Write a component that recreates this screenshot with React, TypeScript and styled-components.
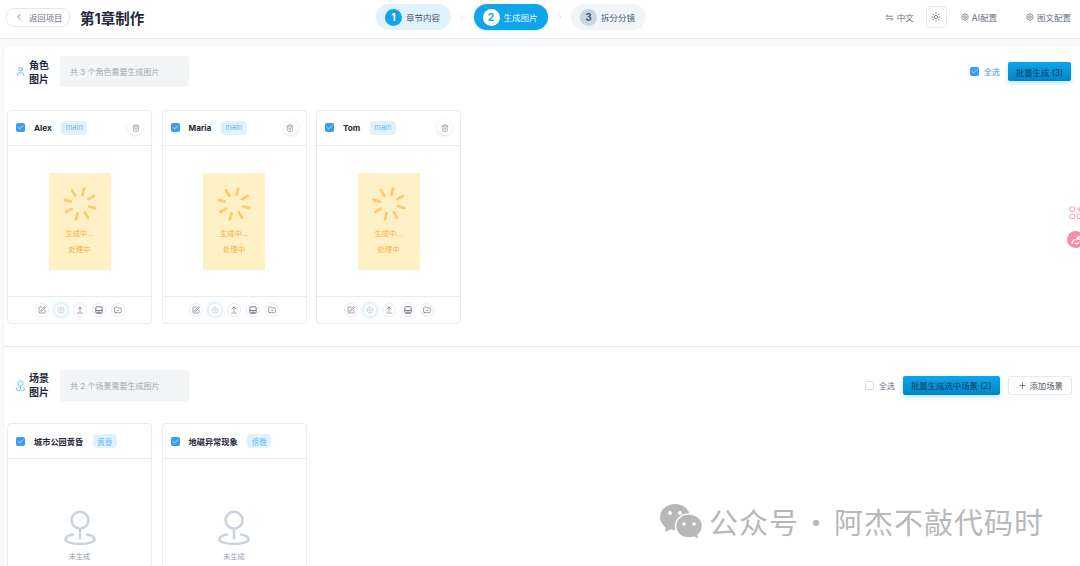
import styled, { createGlobalStyle } from 'styled-components';
import {
	ArrowUpFromLine,
	Check,
	ChevronLeft,
	ChevronRight,
	FolderDot,
	Loader,
	Plus,
	SquarePen,
	Sun,
	Trash2,
	User,
} from 'lucide-react';

const GlobalStyle = createGlobalStyle`
	html, body {
		margin: 0;
		height: 566px;
		overflow: hidden;
		background: #f8fafc;
		font-family: Inter, "Noto Sans CJK SC", "Liberation Sans", sans-serif;
	}
	* {
		box-sizing: border-box;
	}
`;

const Page = styled.div`
	position: relative;
	width: 1080px;
	height: 566px;
	overflow: hidden;
`;

const Header = styled.header`
	height: 39px;
	padding: 0 9px 4px 6px;
	background: #fff;
	border-bottom: 1px solid #e6e9ef;
	display: grid;
	grid-template-columns: 370px auto 1fr;
	align-items: center;
`;

const HeaderLeft = styled.div`
	display: flex;
	align-items: center;
	gap: 10px;
`;

const BackButton = styled.button`
	width: 64px;
	height: 19px;
	padding: 0 0 0 7px;
	display: flex;
	align-items: center;
	gap: 5px;
	background: #fff;
	border: 1px solid #e6e9ef;
	border-radius: 8px;
	color: #6b7280;
	font: inherit;
	font-size: 8.4px;
`;

const Title = styled.h1`
	margin: 0;
	font-size: 14.5px;
	font-weight: 700;
	color: #1f2937;
`;

const Steps = styled.nav`
	display: flex;
	align-items: center;
	color: #d5dae2;
`;

const Step = styled.div<{ $state: 'done' | 'active' | 'todo' }>`
	width: 74.5px;
	height: 26px;
	padding-left: 9px;
	display: flex;
	align-items: center;
	gap: 4px;
	border-radius: 13px;
	font-size: 8.5px;
	white-space: nowrap;
	background: ${(p) =>
		p.$state === 'done' ? '#e0f2fe' : p.$state === 'active' ? '#0ea5e9' : '#f1f5f9'};
	color: ${(p) => (p.$state === 'active' ? '#e6f6fe' : '#475569')};
	box-shadow: ${(p) => (p.$state === 'active' ? '0 1px 3px rgba(14,165,233,.25)' : 'none')};
`;

const StepNumber = styled.span<{ $state: 'done' | 'active' | 'todo' }>`
	width: 17px;
	height: 17px;
	flex: none;
	display: flex;
	align-items: center;
	justify-content: center;
	border-radius: 50%;
	font-size: 10px;
	font-weight: 700;
	background: ${(p) =>
		p.$state === 'done' ? '#0ea5e9' : p.$state === 'active' ? '#fff' : '#cbd5e1'};
	color: ${(p) =>
		p.$state === 'done' ? '#fff' : p.$state === 'active' ? '#0ea5e9' : '#475569'};
`;

const StepArrow = styled.span`
	width: 23px;
	display: flex;
	justify-content: center;
`;

const HeaderRight = styled.div`
	display: flex;
	align-items: center;
	justify-content: flex-end;
	color: #6b7280;
	font-size: 8.5px;
`;

const HeaderAction = styled.span<{ $left: number }>`
	margin-left: ${(p) => p.$left}px;
	display: flex;
	align-items: center;
	gap: 3px;
	white-space: nowrap;
`;

const ThemeButton = styled.span`
	width: 21px;
	height: 22px;
	margin-left: 12px;
	display: flex;
	align-items: center;
	justify-content: center;
	border: 1px solid #e6e9ef;
	border-radius: 4px;
	background: #fff;
`;

const Panel = styled.main`
	margin: 7px 0 0 4px;
	background: #fff;
	border-radius: 6px 0 0 0;
	box-shadow: 0 0 2px rgba(148, 163, 184, 0.25);
	height: 530px;
`;

const Section = styled.section<{ $top: number }>`
	padding: ${(p) => p.$top}px 9px 22px 3px;
`;

const Divider = styled.hr`
	margin: 0;
	border: 0;
	border-top: 1px solid #e6e9ef;
`;

const SectionHead = styled.div`
	display: flex;
	align-items: center;
	margin-bottom: 22.5px;
`;

const SectionIcon = styled.span`
	width: 14px;
	margin-left: 8px;
	display: flex;
	color: #5cc2f5;
`;

const SectionTitle = styled.h2`
	width: 20px;
	margin: 0;
	font-size: 10px;
	line-height: 14px;
	font-weight: 700;
	color: #1f2937;
`;

const Note = styled.div`
	width: 129px;
	height: 31px;
	margin-left: 11px;
	padding-left: 10px;
	display: flex;
	align-items: center;
	background: #f3f4f6;
	border-radius: 2px;
	font-size: 8px;
	color: #a3a8b0;
`;

const SectionActions = styled.div`
	margin-left: auto;
	display: flex;
	align-items: center;
`;

const Box = styled.span<{ $checked?: boolean }>`
	width: 9px;
	height: 9px;
	flex: none;
	display: flex;
	align-items: center;
	justify-content: center;
	border-radius: 1.5px;
	border: 1px solid ${(p) => (p.$checked ? '#3b9bf5' : '#d8dce3')};
	background: ${(p) => (p.$checked ? '#3b9bf5' : '#fff')};
	color: #fff;
`;

const SelectAll = styled.span<{ $on?: boolean }>`
	margin: 0 8px 0 5px;
	font-size: 8px;
	color: ${(p) => (p.$on ? '#3b9bf5' : '#6b7280')};
`;

const PrimaryButton = styled.button`
	height: 19px;
	padding: 0 8px;
	border: 0;
	border-radius: 2px;
	background: linear-gradient(180deg, #0ea5e9, #0284c7);
	box-shadow: 0 2px 5px rgba(14, 165, 233, 0.3);
	color: #0c3a5e;
	font: inherit;
	font-size: 8.4px;
	white-space: nowrap;
`;

const GhostButton = styled.button`
	height: 19px;
	margin: 0 -1px 0 8px;
	padding: 0 8px 0 9px;
	display: flex;
	align-items: center;
	gap: 3px;
	border: 1px solid #e6e9ef;
	border-radius: 2px;
	background: #fff;
	color: #4b5563;
	font: inherit;
	font-size: 8.4px;
	white-space: nowrap;
`;

const CardGrid = styled.div`
	display: flex;
	gap: 9.5px;
`;

const Card = styled.article`
	width: 145px;
	background: #fff;
	border: 1px solid #e8ebf0;
	border-radius: 4px;
`;

const CardHead = styled.div`
	height: 35px;
	padding: 0 8px;
	display: flex;
	align-items: center;
	border-bottom: 1px solid #e8ebf0;
`;

const CardName = styled.span`
	margin-left: 9px;
	font-size: 8.2px;
	font-weight: 700;
	color: #1f2937;
	white-space: nowrap;
`;

const Tag = styled.span`
	height: 14px;
	margin-left: 9.5px;
	padding: 0 4.5px;
	display: flex;
	align-items: center;
	border-radius: 4px;
	background: #e0f2fe;
	color: #5fbcf0;
	font-size: 7.5px;
`;

const DeleteButton = styled.span`
	width: 15px;
	height: 15px;
	margin-left: auto;
	display: flex;
	align-items: center;
	justify-content: center;
	border-radius: 50%;
	background: #fff;
	color: #8b919b;
	box-shadow: 0 1px 3px rgba(239, 100, 100, 0.25);
`;

const CardBody = styled.div`
	height: 150px;
	padding-top: 27px;
	display: flex;
	justify-content: center;
`;

const Thumb = styled.div`
	width: 62px;
	height: 97px;
	padding-top: 12px;
	display: flex;
	flex-direction: column;
	align-items: center;
	background: #fff1c5;
	color: #f8ae3f;
	font-size: 7.3px;
`;

const Spinner = styled(Loader)`
	transform: rotate(15deg);
	color: #fdca70;
	flex: none;
`;

const ThumbLine = styled.span<{ $gap: number }>`
	margin-top: ${(p) => p.$gap}px;
	line-height: 10px;
`;

const Empty = styled.div`
	width: 62px;
	padding-top: 23px;
	display: flex;
	flex-direction: column;
	align-items: center;
	color: #94a3b8;
	font-size: 7.2px;
`;

const EmptyIcon = styled.span`
	display: flex;
	color: #c8d2de;
`;

const EmptyLabel = styled.span`
	margin-top: 6px;
`;

const CardFooter = styled.div`
	height: 27px;
	display: flex;
	align-items: center;
	justify-content: center;
	gap: 5px;
	border-top: 1px solid #e8ebf0;
`;

const ToolButton = styled.span<{ $glow?: boolean }>`
	width: 14px;
	height: 14px;
	display: flex;
	align-items: center;
	justify-content: center;
	border-radius: 50%;
	border: 1px solid #e8ebf0;
	color: ${(p) => (p.$glow ? '#c3c9d2' : '#6b7280')};
	box-shadow: ${(p) => (p.$glow ? '0 0 4px rgba(56,189,248,.4)' : 'none')};
`;

const FloatDock = styled.div`
	position: absolute;
	right: -4px;
	top: 206px;
	display: flex;
	flex-direction: column;
	align-items: center;
	gap: 11px;
`;

const DockIcon = styled.span`
	width: 14px;
	height: 14px;
	display: flex;
	color: #f9a8c0;
`;

const DockBadge = styled.span`
	width: 17px;
	height: 17px;
	display: flex;
	align-items: center;
	justify-content: center;
	border-radius: 50%;
	background: #f58fab;
	color: #fff;
`;

const Watermark = styled.div`
	position: absolute;
	left: 660px;
	top: 501px;
	display: flex;
	align-items: center;
	gap: 7px;
	color: #b8b8b8;
	font-family: "Noto Sans CJK SC", sans-serif;
	font-size: 29px;
	line-height: 40px;
	letter-spacing: 1px;
	word-spacing: -5px;
	white-space: nowrap;
`;

function SwapIcon() {
	return (
		<svg width='9' height='9' viewBox='0 0 10 10' fill='none' stroke='currentColor' strokeWidth='0.9'>
			<path d='M1 3.6h8M1 3.6l2.4-2.2M9 6.4H1M9 6.4L6.6 8.6' />
		</svg>
	);
}

function GearIcon({ size }: { size: number }) {
	return (
		<svg width={size} height={size} viewBox='0 0 10 10' fill='none' stroke='currentColor' strokeWidth='1'>
			<path d='M5 .8l3.7 2.1v4.2L5 9.2 1.3 7.1V2.9z' />
			<circle cx='5' cy='5' r='1.6' />
		</svg>
	);
}

function SaveImageIcon() {
	return (
		<svg width='8' height='8' viewBox='0 0 10 10' fill='none' stroke='currentColor' strokeWidth='1.2'>
			<rect x='1' y='1' width='8' height='8' rx='1' />
			<path d='M1 5.5h8M3.5 9V7.5h3V9' />
		</svg>
	);
}

function PinIcon({ size, stroke }: { size: number; stroke: number }) {
	return (
		<svg width={size} height={size} viewBox='0 0 32 32' fill='none' stroke='currentColor' strokeWidth={stroke}>
			<circle cx='16' cy='10' r='7.5' />
			<path d='M16 17.5V27' />
			<path d='M10.5 22.5C6.5 23.3 3 25 3 27c0 2.4 5.8 4 13 4s13-1.6 13-4c0-2-3.5-3.7-7.5-4.5' />
		</svg>
	);
}

function WechatLogo() {
	return (
		<svg width='42' height='36' viewBox='0 0 42 36'>
			<ellipse cx='15' cy='14' rx='15' ry='13' fill='#b8b8b8' />
			<path d='M6 22l-1 7 8-4z' fill='#b8b8b8' />
			<circle cx='10' cy='10' r='2' fill='#fff' />
			<circle cx='20' cy='10' r='2' fill='#fff' />
			<ellipse cx='29' cy='23' rx='13.5' ry='12' fill='#b8b8b8' stroke='#fff' strokeWidth='1.5' />
			<path d='M34 33l4 3-1-6z' fill='#b8b8b8' />
			<circle cx='24' cy='21' r='1.8' fill='#fff' />
			<circle cx='34' cy='21' r='1.8' fill='#fff' />
		</svg>
	);
}

function CardTools() {
	return (
		<CardFooter>
			<ToolButton><SquarePen size={8} /></ToolButton>
			<ToolButton $glow><GearIcon size={8} /></ToolButton>
			<ToolButton><ArrowUpFromLine size={8} /></ToolButton>
			<ToolButton><SaveImageIcon /></ToolButton>
			<ToolButton><FolderDot size={8} /></ToolButton>
		</CardFooter>
	);
}

function CheckBox() {
	return (
		<Box $checked>
			<Check size={7} strokeWidth={2.5} />
		</Box>
	);
}

function CharacterCard({ name }: { name: string }) {
	return (
		<Card>
			<CardHead>
				<CheckBox />
				<CardName>{name}</CardName>
				<Tag>main</Tag>
				<DeleteButton><Trash2 size={8} /></DeleteButton>
			</CardHead>
			<CardBody>
				<Thumb>
					<Spinner size={38} strokeWidth={1.8} />
					<ThumbLine $gap={6}>生成中...</ThumbLine>
					<ThumbLine $gap={6}>处理中</ThumbLine>
				</Thumb>
			</CardBody>
			<CardTools />
		</Card>
	);
}

function SceneCard({ name, tag }: { name: string; tag: string }) {
	return (
		<Card>
			<CardHead>
				<CheckBox />
				<CardName>{name}</CardName>
				<Tag>{tag}</Tag>
			</CardHead>
			<CardBody>
				<Empty>
					<EmptyIcon><PinIcon size={36} stroke={2.2} /></EmptyIcon>
					<EmptyLabel>未生成</EmptyLabel>
				</Empty>
			</CardBody>
		</Card>
	);
}

export default function App() {
	return (
		<Page>
			<GlobalStyle />
			<Header>
				<HeaderLeft>
					<BackButton><ChevronLeft size={10} />返回项目</BackButton>
					<Title>第1章制作</Title>
				</HeaderLeft>
				<Steps>
					<Step $state='done'><StepNumber $state='done'>1</StepNumber>章节内容</Step>
					<StepArrow><ChevronRight size={8} /></StepArrow>
					<Step $state='active'><StepNumber $state='active'>2</StepNumber>生成图片</Step>
					<StepArrow><ChevronRight size={8} /></StepArrow>
					<Step $state='todo'><StepNumber $state='todo'>3</StepNumber>拆分分镜</Step>
				</Steps>
				<HeaderRight>
					<HeaderAction $left={0}><SwapIcon />中文</HeaderAction>
					<ThemeButton><Sun size={10} /></ThemeButton>
					<HeaderAction $left={14}><GearIcon size={8} />AI配置</HeaderAction>
					<HeaderAction $left={29}><GearIcon size={8} />图文配置</HeaderAction>
				</HeaderRight>
			</Header>
			<Panel>
				<Section $top={10}>
					<SectionHead>
						<SectionIcon><User size={11} /></SectionIcon>
						<SectionTitle>角色图片</SectionTitle>
						<Note>共 3 个角色需要生成图片</Note>
						<SectionActions>
							<CheckBox />
							<SelectAll $on>全选</SelectAll>
							<PrimaryButton>批量生成 (3)</PrimaryButton>
						</SectionActions>
					</SectionHead>
					<CardGrid>
						<CharacterCard name='Alex' />
						<CharacterCard name='Maria' />
						<CharacterCard name='Tom' />
					</CardGrid>
				</Section>
				<Divider />
				<Section $top={23}>
					<SectionHead>
						<SectionIcon><PinIcon size={11} stroke={2.6} /></SectionIcon>
						<SectionTitle>场景图片</SectionTitle>
						<Note>共 2 个场景需要生成图片</Note>
						<SectionActions>
							<Box />
							<SelectAll>全选</SelectAll>
							<PrimaryButton>批量生成选中场景 (2)</PrimaryButton>
							<GhostButton><Plus size={9} />添加场景</GhostButton>
						</SectionActions>
					</SectionHead>
					<CardGrid>
						<SceneCard name='城市公园黄昏' tag='黄昏' />
						<SceneCard name='地磁异常现象' tag='傍晚' />
					</CardGrid>
				</Section>
			</Panel>
			<FloatDock>
				<DockIcon>
					<svg width='14' height='14' viewBox='0 0 14 14' fill='none' stroke='currentColor' strokeWidth='1.1'>
						<rect x='1' y='1' width='4.5' height='4.5' rx='1' />
						<rect x='1' y='8' width='4.5' height='4.5' rx='1' />
						<rect x='8' y='8' width='4.5' height='4.5' rx='1' />
						<path d='M10.2 1v4.5M8 3.2h4.5' />
					</svg>
				</DockIcon>
				<DockBadge>
					<svg width='12' height='12' viewBox='0 0 12 12' fill='none' stroke='currentColor' strokeWidth='1.4'>
						<path d='M2 10c0-3 1.5-3 2.5-5M5 9c1 1 3 1 4-1M7 3l3 3M10 2L6 6' />
					</svg>
				</DockBadge>
			</FloatDock>
			<Watermark>
				<WechatLogo />
				<span>公众号 · 阿杰不敲代码时</span>
			</Watermark>
		</Page>
	);
}
